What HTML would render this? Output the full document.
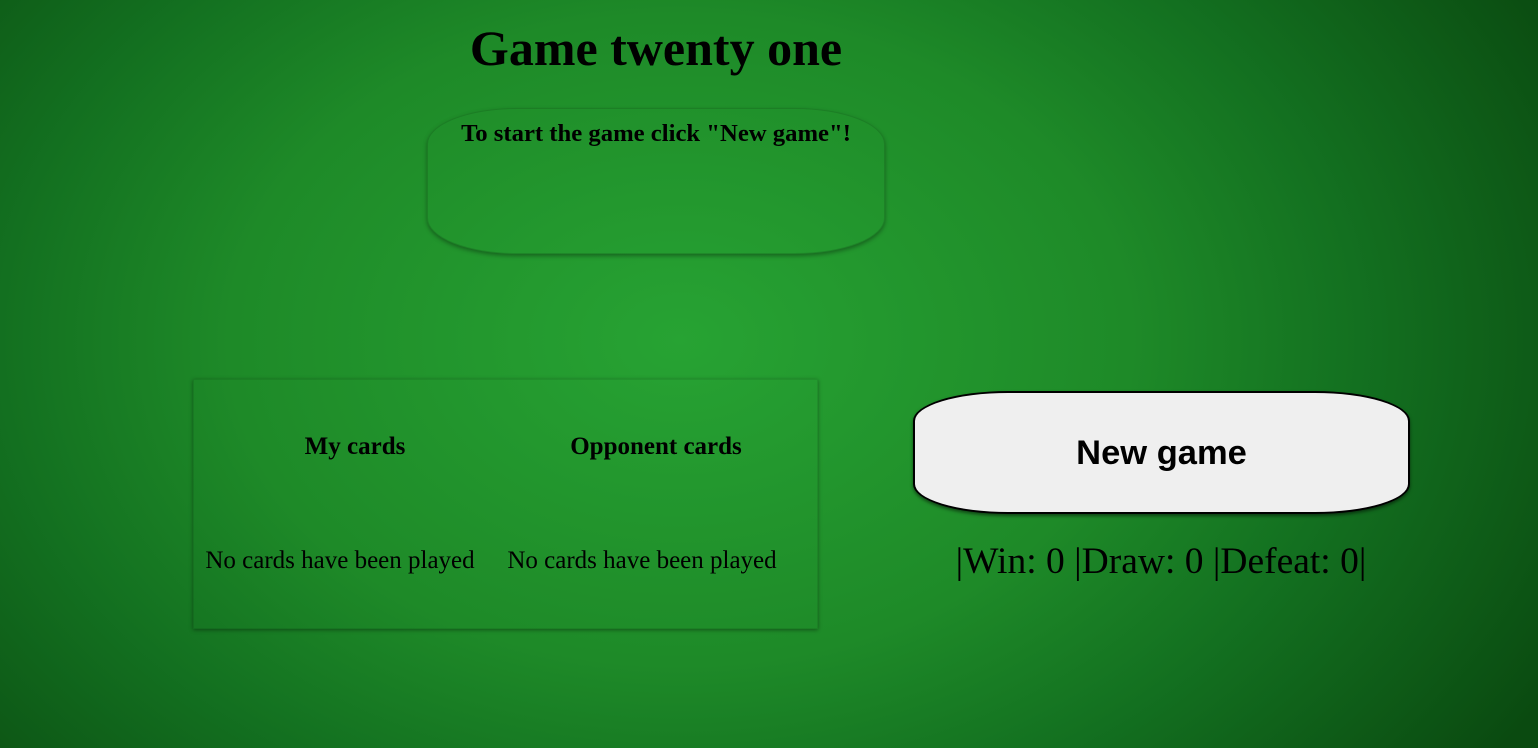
<!DOCTYPE html>
<html><head><style>
html,body{margin:0;width:1538px;height:748px;overflow:hidden}
body{background:radial-gradient(ellipse 1000px 720px at 680px 340px,#27a333 0%,#1e8a28 45%,#137020 68%,#0a4a10 100%);font-family:"Liberation Serif",serif;position:relative}
.a{position:absolute}
h1{position:absolute;margin:0;left:356px;width:600px;text-align:center;top:19px;font-size:50px;font-weight:bold;line-height:58px}
.msg{left:427px;top:108px;width:458px;height:146px;border:1px solid rgba(0,0,0,0.12);border-radius:90px/36px;box-shadow:0 2px 4px rgba(0,0,0,0.35);text-align:center;font-weight:bold;font-size:24.7px;line-height:50px;box-sizing:border-box}
.panel{left:193px;top:379px;width:625px;height:250px;box-shadow:0 1px 4px rgba(0,0,0,0.4);border:1px solid rgba(0,0,0,0.08);box-sizing:border-box}
.h{font-weight:bold;font-size:25px;text-align:center;top:432px;line-height:30px}
.n{font-size:25px;top:546px;line-height:30px;text-align:center}
.btn{left:913px;top:391px;width:497px;height:123px;background:#efefef;border:2px solid #000;box-sizing:border-box;border-radius:95px/30px;box-shadow:0 2px 3px rgba(0,0,0,0.5);font-family:"Liberation Sans",sans-serif;font-weight:bold;font-size:34.5px;text-align:center;line-height:121px}
.st{left:900px;width:522px;top:539px;text-align:center;font-size:37.5px;line-height:46px}
</style></head><body>
<h1>Game twenty one</h1>
<div class="a msg">To start the game click "New game"!</div>
<div class="a panel"></div>
<div class="a h" style="left:255px;width:200px">My cards</div>
<div class="a h" style="left:506px;width:300px">Opponent cards</div>
<div class="a n" style="left:190px;width:300px">No cards have been played</div>
<div class="a n" style="left:492px;width:300px">No cards have been played</div>
<div class="a btn">New game</div>
<div class="a st">|Win: 0 |Draw: 0 |Defeat: 0|</div>
</body></html>
